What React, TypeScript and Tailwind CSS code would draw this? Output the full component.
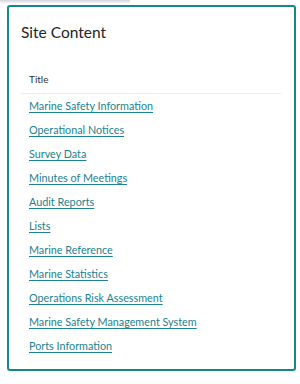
const links = [
  "Marine Safety Information",
  "Operational Notices",
  "Survey Data",
  "Minutes of Meetings",
  "Audit Reports",
  "Lists",
  "Marine Reference",
  "Marine Statistics",
  "Operations Risk Assessment",
  "Marine Safety Management System",
  "Ports Information",
];

const App = () => {
  return (
    <div className="w-[300px] h-[384px] bg-white relative font-['Lato',sans-serif]">
      <div className="absolute left-0 top-0 w-[130px] h-[4px] bg-gradient-to-b from-gray-300 to-white rounded-b-md" />
      <div className="pt-[5px] pl-[7px]">
        <div className="w-[289px] h-[366px] border-2 border-[#17858a] rounded-[3px] bg-white px-[12px]">
          <h2 className="text-[15.5px] text-[#252525] pt-[14px] leading-[22px]">Site Content</h2>
          <div className="mt-[22px] border-b border-[#ececec] pl-[8px] pb-[4px] mr-[1px]">
            <span className="text-[10px] text-[#323232]">Title</span>
          </div>
          <ul className="pl-[8px]">
            {links.map((l) => (
              <li key={l} className="h-[24px] flex items-center">
                <a href="#" className="text-[10.8px] text-[#1a8290] underline underline-offset-2">
                  {l}
                </a>
              </li>
            ))}
          </ul>
        </div>
      </div>
    </div>
  );
};

export default App;
